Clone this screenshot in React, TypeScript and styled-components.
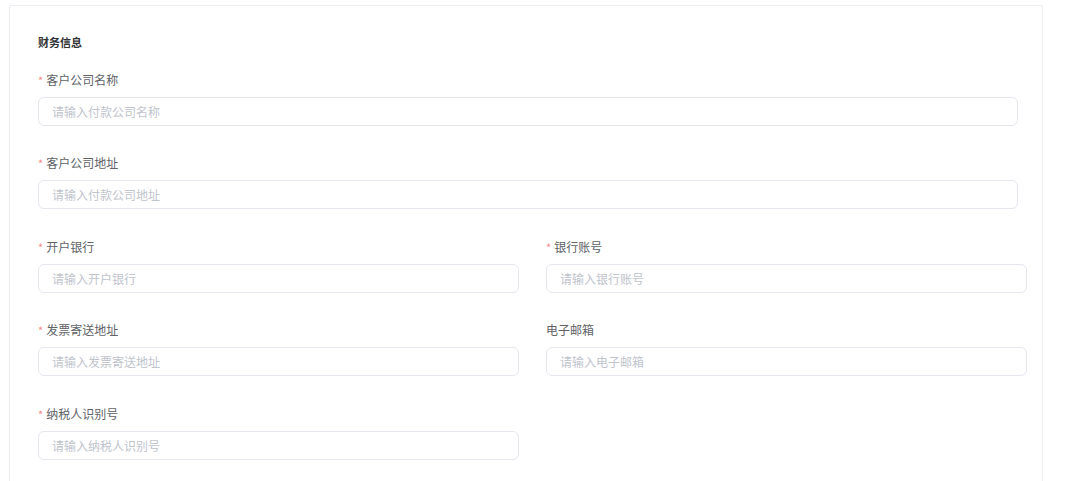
import styled, { createGlobalStyle } from "styled-components";

const GlobalStyle = createGlobalStyle`
  body {
    margin: 0;
    background: #fff;
    font-family: "Noto Sans CJK SC", "Noto Sans", sans-serif;
  }
`;

const Page = styled.div`
  padding: 5px 0 0 9px;
  height: 481px;
  box-sizing: border-box;
  overflow: hidden;
`;

const Card = styled.div`
  width: 1034px;
  min-height: 520px;
  box-sizing: border-box;
  border: 1px solid #ebeef5;
  border-radius: 2px;
  background: #fff;
  padding: 26px 15px 0 28px;
`;

const Title = styled.div`
  font-size: 11px;
  line-height: 20px;
  font-weight: 600;
  color: #303133;
  margin-bottom: 18px;
`;

const Grid = styled.div`
  display: grid;
  grid-template-columns: 481px 481px;
  column-gap: 27px;
`;

const Item = styled.div<{ $wide?: boolean }>`
  grid-column: ${(p) => (p.$wide ? "1 / span 2" : "auto")};
  padding-right: ${(p) => (p.$wide ? "9px" : "0")};
  margin-bottom: 27.4px;
`;

const Label = styled.div`
  font-size: 12px;
  line-height: 20px;
  color: #606266;
  margin-bottom: 7px;
  display: flex;
  align-items: center;
`;

const Star = styled.span`
  color: #f78989;
  font-size: 11px;
  margin-right: 3px;
`;

const Input = styled.input`
  display: block;
  width: 100%;
  height: 29px;
  box-sizing: border-box;
  border: 1px solid #e4e7ed;
  border-radius: 6px;
  padding: 0 13px;
  font-size: 12px;
  font-family: inherit;
  color: #606266;
  outline: none;
  background: #fff;
  &::placeholder {
    color: #c0c4cc;
  }
`;

type Field = { label: string; placeholder: string; required: boolean; wide?: boolean };

const fields: Field[] = [
  { label: "客户公司名称", placeholder: "请输入付款公司名称", required: true, wide: true },
  { label: "客户公司地址", placeholder: "请输入付款公司地址", required: true, wide: true },
  { label: "开户银行", placeholder: "请输入开户银行", required: true },
  { label: "银行账号", placeholder: "请输入银行账号", required: true },
  { label: "发票寄送地址", placeholder: "请输入发票寄送地址", required: true },
  { label: "电子邮箱", placeholder: "请输入电子邮箱", required: false },
  { label: "纳税人识别号", placeholder: "请输入纳税人识别号", required: true },
];

export default function App() {
  return (
    <Page>
      <GlobalStyle />
      <Card>
        <Title>财务信息</Title>
        <Grid>
          {fields.map((f) => (
            <Item key={f.label} $wide={f.wide}>
              <Label>
                {f.required && <Star>*</Star>}
                {f.label}
              </Label>
              <Input placeholder={f.placeholder} />
            </Item>
          ))}
        </Grid>
      </Card>
    </Page>
  );
}
